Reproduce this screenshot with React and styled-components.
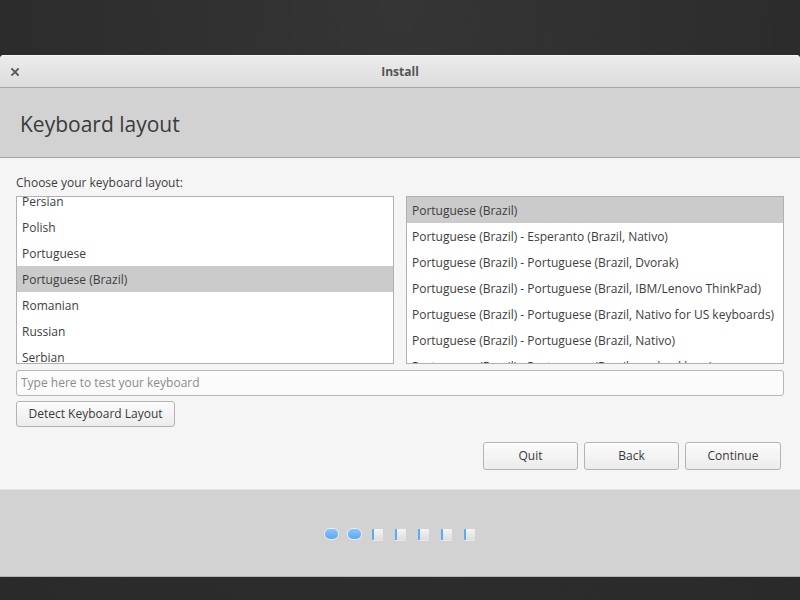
import React, { useLayoutEffect, useRef } from "react";
import styled, { createGlobalStyle } from "styled-components";

const GlobalStyle = createGlobalStyle`
  html, body {
    margin: 0;
    padding: 0;
    background: #2f2f2f;
  }
  * {
    box-sizing: border-box;
  }
`;

const Desktop = styled.div`
  width: 800px;
  height: 600px;
  padding-top: 55px;
  background: radial-gradient(ellipse at 50% 0%, #353535 0%, #2c2c2c 70%, #2a2a2a 100%);
  font-family: "Open Sans", "Noto Sans", sans-serif;
  color: #3d3d3d;
  overflow: hidden;
`;

const Window = styled.div`
  height: 522px;
  display: flex;
  flex-direction: column;
  border-radius: 4px 4px 0 0;
  overflow: hidden;
  background: #f5f5f5;
  border-bottom: 1px solid #b4b4b4;
`;

const TitleBar = styled.div`
  height: 33px;
  flex: none;
  display: flex;
  align-items: center;
  position: relative;
  justify-content: center;
  background: linear-gradient(#ececec, #dcdcdc);
  border-top: 1px solid #f6f6f6;
  border-bottom: 1px solid #a8a8a8;
  font-size: 12px;
  font-weight: 700;
  color: #555;
`;

const CloseButton = styled.span`
  position: absolute;
  left: 11px;
  top: 12px;
  width: 8px;
  height: 8px;
  display: flex;
`;

const Header = styled.div`
  height: 70px;
  flex: none;
  display: flex;
  align-items: center;
  padding-left: 20px;
  padding-top: 3px;
  background: #d2d2d2;
  border-bottom: 1px solid #a2a2a2;
  h1 {
    margin: 0;
    font-size: 21px;
    font-weight: 400;
    color: #3a3a3a;
  }
`;

const Content = styled.div`
  flex: 1;
  padding: 16px 16px 0 16px;
  display: flex;
  flex-direction: column;
  background: #f5f5f5;
`;

const Label = styled.div`
  font-size: 12px;
  line-height: 17px;
  margin-bottom: 5px;
`;

const Lists = styled.div`
  display: grid;
  grid-template-columns: 1fr 1fr;
  gap: 12px;
`;

const ListBox = styled.div`
  height: 168px;
  background: #fff;
  border: 1px solid #b1b1b1;
  overflow: hidden;
`;

const Row = styled.div`
  height: 26px;
  line-height: 28px;
  overflow: hidden;
  padding-left: 5px;
  font-size: 12px;
  white-space: nowrap;
  background: ${(p) => (p.$selected ? "#cbcbcb" : "transparent")};
`;

const TestInput = styled.input`
  margin-top: 6px;
  height: 26px;
  width: 100%;
  border: 1px solid #b8b8b8;
  border-radius: 3px;
  background: #fbfbfb;
  padding: 0 4px 2px;
  font-family: inherit;
  font-size: 12px;
  color: #3d3d3d;
  outline: none;
  &::placeholder {
    color: #8c8c8c;
  }
`;

const Button = styled.button`
  height: ${(p) => (p.$tall ? "28px" : "26px")};
  width: ${(p) => p.$width || "auto"};
  flex: none;
  padding: 0 0 1px;
  border: 1px solid #b3b3b3;
  border-radius: 3px;
  background: linear-gradient(#fbfbfb, #ececec);
  font-family: inherit;
  font-size: 12px;
  color: #3a3a3a;
  box-shadow: inset 0 1px 0 #fff;
`;

const DetectRow = styled.div`
  margin-top: 5px;
  display: flex;
`;

const Actions = styled.div`
  margin-top: 15px;
  padding-right: 3px;
  display: flex;
  justify-content: flex-end;
  gap: 6px;
`;

const Footer = styled.div`
  height: 87px;
  flex: none;
  display: flex;
  align-items: center;
  justify-content: center;
  gap: 10px;
  padding-top: 2px;
  background: #d2d2d2;
  border-top: 1px solid #e2e2e2;
`;

const Dot = styled.span`
  display: block;
  height: ${(p) => (p.$done ? "10px" : "11px")};
  width: ${(p) => (p.$done ? "13px" : "11px")};
  margin: ${(p) => (p.$done ? "0" : "0 1px")};
  border-radius: ${(p) => (p.$done ? "5px" : "1px")};
  background: ${(p) =>
    p.$done
      ? "linear-gradient(#8ac4ff, #5aa9f6)"
      : "linear-gradient(90deg, #5aaaf5 0, #5aaaf5 2px, transparent 2px), linear-gradient(#f4f4f4, #dedede)"};
  box-shadow: ${(p) =>
    p.$done ? "0 0 0 1px rgba(255,255,255,0.55)" : "0 1px 0 rgba(255,255,255,0.5)"};
`;

const layouts = [
  "Nepali",
  "Persian",
  "Polish",
  "Portuguese",
  "Portuguese (Brazil)",
  "Romanian",
  "Russian",
  "Serbian",
  "Sinhala (phonetic)",
];

const variants = [
  "Portuguese (Brazil)",
  "Portuguese (Brazil) - Esperanto (Brazil, Nativo)",
  "Portuguese (Brazil) - Portuguese (Brazil, Dvorak)",
  "Portuguese (Brazil) - Portuguese (Brazil, IBM/Lenovo ThinkPad)",
  "Portuguese (Brazil) - Portuguese (Brazil, Nativo for US keyboards)",
  "Portuguese (Brazil) - Portuguese (Brazil, Nativo)",
  "Portuguese (Brazil) - Portuguese (Brazil, no dead keys)",
  "Portuguese (Brazil) - Russian (Brazil, phonetic)",
];

function CloseIcon() {
  return (
    <svg width="8" height="8" viewBox="0 0 8 8">
      <path d="M1 1L7 7M7 1L1 7" stroke="#5a5a5a" strokeWidth="1.8" strokeLinecap="square" />
    </svg>
  );
}

function App() {
  const leftRef = useRef(null);

  useLayoutEffect(() => {
    if (leftRef.current) leftRef.current.scrollTop = 35;
  }, []);

  return (
    <>
      <GlobalStyle />
      <Desktop>
        <Window>
          <TitleBar>
            <CloseButton>
              <CloseIcon />
            </CloseButton>
            Install
          </TitleBar>
          <Header>
            <h1>Keyboard layout</h1>
          </Header>
          <Content>
            <Label>Choose your keyboard layout:</Label>
            <Lists>
              <ListBox ref={leftRef}>
                {layouts.map((l) => (
                  <Row key={l} $selected={l === "Portuguese (Brazil)"}>
                    {l}
                  </Row>
                ))}
              </ListBox>
              <ListBox>
                {variants.map((v, i) => (
                  <Row key={v} $selected={i === 0}>
                    {v}
                  </Row>
                ))}
              </ListBox>
            </Lists>
            <TestInput placeholder="Type here to test your keyboard" />
            <DetectRow>
              <Button $width="159px">Detect Keyboard Layout</Button>
            </DetectRow>
            <Actions>
              <Button $tall $width="95px">Quit</Button>
              <Button $tall $width="95px">Back</Button>
              <Button $tall $width="96px">Continue</Button>
            </Actions>
          </Content>
          <Footer>
            <Dot $done />
            <Dot $done />
            <Dot />
            <Dot />
            <Dot />
            <Dot />
            <Dot />
          </Footer>
        </Window>
      </Desktop>
    </>
  );
}

export default App;
